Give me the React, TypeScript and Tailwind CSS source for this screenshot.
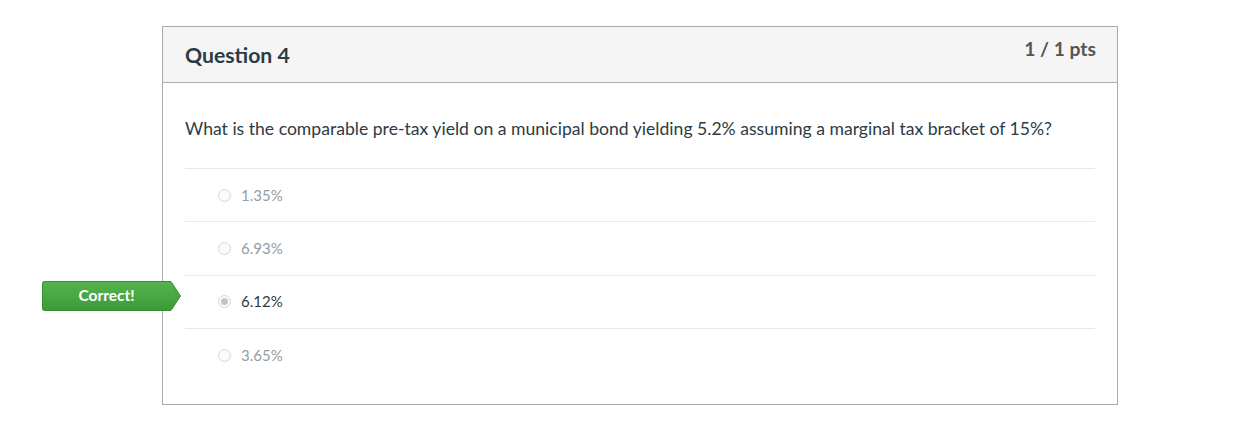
import React from "react";

const answers = [
  { label: "1.35%", selected: false },
  { label: "6.93%", selected: false },
  { label: "6.12%", selected: true },
  { label: "3.65%", selected: false },
];

function Radio({ selected }: { selected: boolean }) {
  return (
    <span className="flex h-[13px] w-[13px] items-center justify-center rounded-full border border-[#d6d6d6] bg-[#fbfbfb]">
      {selected && <span className="h-[7px] w-[7px] rounded-full bg-[#c4c4c4]" />}
    </span>
  );
}

function CorrectBadge() {
  return (
    <div className="absolute left-[-121px] top-[254px] flex h-[30px] items-stretch">
      <div className="flex w-[128px] items-center justify-center rounded-l-[3px] border border-r-0 border-[#3a8d35] bg-gradient-to-b from-[#52b44d] to-[#3f9a3a] text-[15.5px] font-bold text-white">
        Correct!
      </div>
      <svg width="11" height="30" viewBox="0 0 11 30" className="block">
        <defs>
          <linearGradient id="g" x1="0" y1="0" x2="0" y2="1">
            <stop offset="0" stopColor="#52b44d" />
            <stop offset="1" stopColor="#3f9a3a" />
          </linearGradient>
        </defs>
        <path d="M0 0.5 L1 0.5 L10.5 15 L1 29.5 L0 29.5 Z" fill="url(#g)" stroke="#3a8d35" strokeWidth="1" />
        <rect x="0" y="1" width="1.5" height="28" fill="url(#g)" />
      </svg>
    </div>
  );
}

export default function App() {
  return (
    <div className="min-h-[422px] bg-white pl-[162px] pt-[26px]" style={{ fontFamily: "Lato, 'Noto Sans', sans-serif" }}>
      <div className="relative w-[956px] border border-[#aaaaaa] bg-white">
        <CorrectBadge />
        <div className="flex h-[56px] items-start justify-between border-b border-[#aaaaaa] bg-[#f5f5f5] pl-[22px] pr-[21px]">
          <h2 className="pt-[13px] text-[21.2px] font-bold leading-[30px] text-[#2d3b45]">Question 4</h2>
          <span className="pt-[10px] text-[19.3px] font-bold leading-[24px] text-[#555555]">1 / 1 pts</span>
        </div>
        <div className="px-[22px] pb-[23px] pt-[34px]">
          <p className="text-[17.6px] leading-[24px] text-[#2d3b45]">
            What is the comparable pre-tax yield on a municipal bond yielding 5.2% assuming a marginal tax bracket of 15%?
          </p>
          <div className="mt-[27px]">
            {answers.map((a) => (
              <div key={a.label} className="flex h-[53.3px] items-center gap-[10px] border-t border-[#e8e8e8] pl-[33px]">
                <Radio selected={a.selected} />
                <span className={`text-[15px] ${a.selected ? "text-[#2d3b45]" : "text-[#959ca3]"}`}>{a.label}</span>
              </div>
            ))}
          </div>
        </div>
      </div>
    </div>
  );
}
